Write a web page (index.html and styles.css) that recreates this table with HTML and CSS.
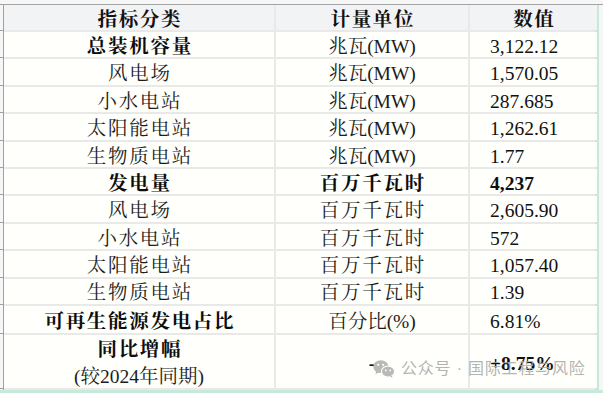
FILE: index.html
```html
<!DOCTYPE html>
<html lang="zh">
<head>
<meta charset="utf-8">
<title>装机容量与发电量</title>
<link rel="stylesheet" href="styles.css">
</head>
<body>
<div class="top"></div>
<div class="main">
  <div class="gutter">
    <div class="tick"></div><div class="tick"></div><div class="tick"></div><div class="tick"></div>
    <div class="tick"></div><div class="tick"></div><div class="tick"></div><div class="tick"></div>
    <div class="tick"></div><div class="tick"></div><div class="tick"></div><div class="tick"></div>
    <div class="tick"></div>
  </div>
  <div class="sheet">
    <div class="c head zh">指标分类</div><div class="c head zh">计量单位</div><div class="c head zh">数值</div>

    <div class="c b zh">总装机容量</div><div class="c">兆瓦(MW)</div><div class="c num">3,122.12</div>
    <div class="c zh">风电场</div><div class="c">兆瓦(MW)</div><div class="c num">1,570.05</div>
    <div class="c zh">小水电站</div><div class="c">兆瓦(MW)</div><div class="c num">287.685</div>
    <div class="c zh">太阳能电站</div><div class="c">兆瓦(MW)</div><div class="c num">1,262.61</div>
    <div class="c zh">生物质电站</div><div class="c">兆瓦(MW)</div><div class="c num">1.77</div>

    <div class="c b zh">发电量</div><div class="c b zh">百万千瓦时</div><div class="c num b">4,237</div>
    <div class="c zh">风电场</div><div class="c zh">百万千瓦时</div><div class="c num">2,605.90</div>
    <div class="c zh">小水电站</div><div class="c zh">百万千瓦时</div><div class="c num">572</div>
    <div class="c zh">太阳能电站</div><div class="c zh">百万千瓦时</div><div class="c num">1,057.40</div>
    <div class="c zh">生物质电站</div><div class="c zh">百万千瓦时</div><div class="c num">1.39</div>

    <div class="c b zh">可再生能源发电占比</div><div class="c">百分比(%)</div><div class="c num">6.81%</div>

    <div class="c two"><span class="b zh">同比增幅</span><span>(较2024年同期)</span></div>
    <div class="c b">-</div>
    <div class="c num b">+8.75%</div>

    <div class="mark">
      <svg class="wx" viewBox="0 0 22 18" width="22" height="18">
        <ellipse cx="7.8" cy="6.6" rx="7.6" ry="6.4" fill="#b9b9b9"/>
        <path d="M3.2 11.5 L2.4 14.2 L5.6 12.4 Z" fill="#b9b9b9"/>
        <ellipse cx="15" cy="11.6" rx="6.6" ry="5.6" fill="#b9b9b9" stroke="#fffffb" stroke-width="1.2"/>
        <path d="M18.6 15.6 L19.6 17.8 L16.8 16.6 Z" fill="#b9b9b9"/>
        <circle cx="5.2" cy="4.8" r="1.1" fill="#fffffb"/>
        <circle cx="10.2" cy="4.8" r="1.1" fill="#fffffb"/>
        <circle cx="12.8" cy="10.4" r="0.9" fill="#fffffb"/>
        <circle cx="17.2" cy="10.4" r="0.9" fill="#fffffb"/>
      </svg>
      <span class="mtext">公众号 · 国际工程与风险</span>
    </div>
  </div>
  <div class="green-r"></div>
</div>
<div class="green-b"></div>
</body>
</html>
```

FILE: styles.css
```css
html, body {
  margin: 0;
  padding: 0;
  background: #f6f6f6;
}
body {
  width: 603px;
  height: 393px;
  overflow: hidden;
  font-family: "Liberation Serif", "Noto Serif CJK SC", "Noto Sans CJK SC", serif;
  font-size: 19.5px;
  color: #1c1c1c;
}
.top {
  height: 4px;
  border-bottom: 1px solid #a3a3a3;
  background: #f6f6f6;
}
.main {
  display: flex;
  height: 385px;
}
.gutter {
  width: 3px;
  border-right: 1px solid #a0a0a0;
  background: #f6f6f6;
  display: grid;
  grid-template-rows: 25px repeat(10, 25.4px) 27px 53px;
  row-gap: 2px;
}
.tick {
  box-shadow: 0 1px 0 #a0a0a0;
}
.sheet {
  position: relative;
  width: 589px;
  display: grid;
  grid-template-columns: 270px 192px 127px;
  grid-template-rows: 25px repeat(10, 25.4px) 27px 53px;
  gap: 2px;
  padding: 0 2px 2px 0;
  background: #e9e9e9;
}
.c {
  background: #fffffb;
  display: flex;
  align-items: center;
  justify-content: center;
  white-space: nowrap;
  line-height: 1;
  padding-top: 4px;
  box-sizing: border-box;
}
.c.zh {
  letter-spacing: 1.7px;
  padding-left: 1.7px;
}
.c.head {
  background: #f2f3f5;
  font-weight: bold;
  color: #111;
}
.b {
  font-weight: bold;
  color: #0d0d0d;
}
span.zh {
  letter-spacing: 1.7px;
  padding-left: 1.7px;
}
.c.num {
  justify-content: flex-start;
  padding-left: 20px;
  color: #111;
}
.c.two {
  flex-direction: column;
  line-height: 27px;
  padding-top: 4px;
}
.green-r {
  width: 4px;
  background: #c6e9d9;
}
.green-b {
  height: 3px;
  background: #c6e9d9;
}
.mark {
  position: absolute;
  left: 369px;
  top: 355px;
  display: flex;
  align-items: center;
  gap: 6px;
  pointer-events: none;
}
.wx {
  display: block;
}
.mtext {
  font-family: "Liberation Sans", "Noto Sans CJK SC", sans-serif;
  font-size: 16px;
  letter-spacing: 0.8px;
  color: rgba(165, 165, 165, 0.85);
  line-height: 1;
}
```
